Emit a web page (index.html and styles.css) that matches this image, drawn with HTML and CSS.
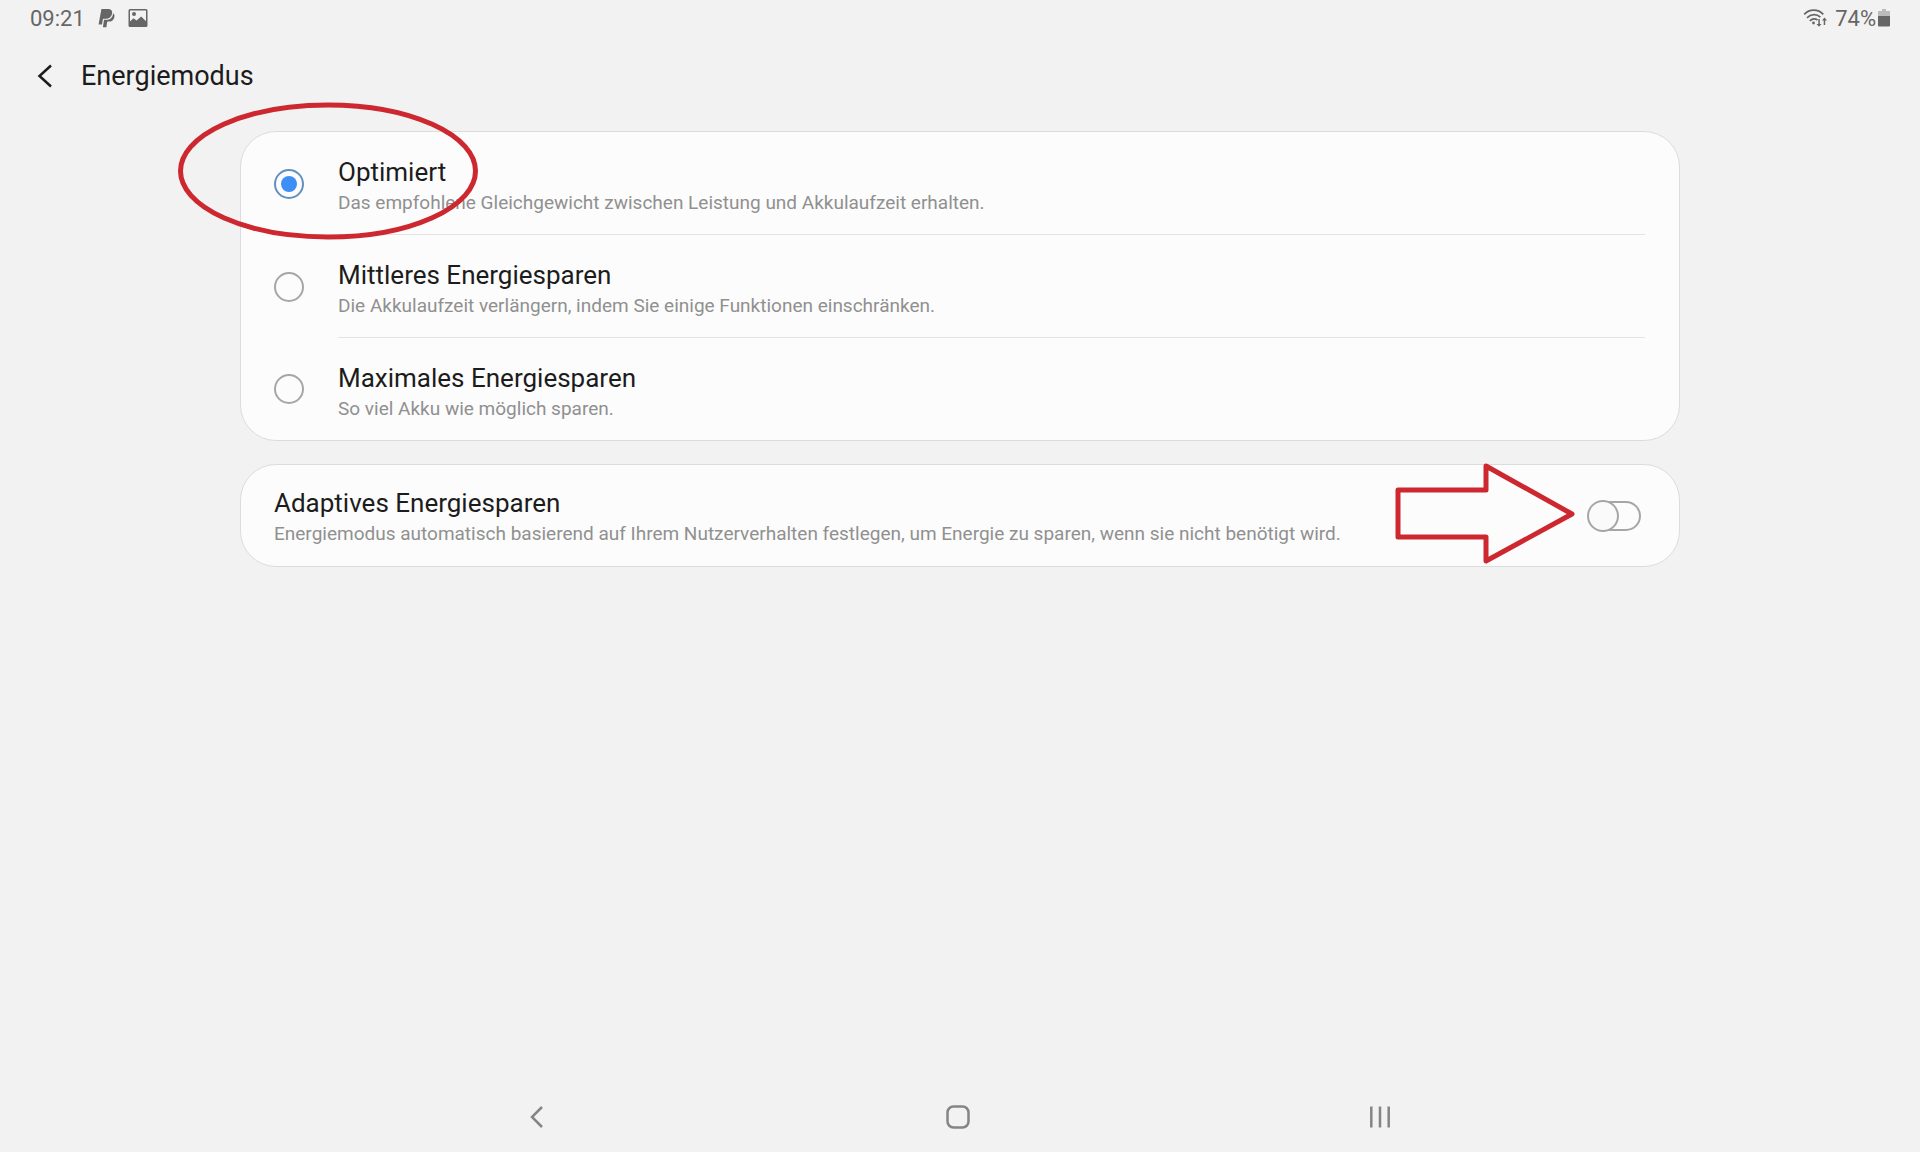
FILE: index.html
```html
<!DOCTYPE html>
<html lang="de">
<head>
    <meta charset="UTF-8">
    <meta name="viewport" content="width=device-width, initial-scale=1.0">
    <title>Energiemodus</title>
    <link rel="stylesheet" href="styles.css">
</head>
<body>
    <div class="status-bar">
        <div class="status-left">
            <span>09:21</span>
            <svg class="icon-paypal" width="17" height="20" viewBox="0 0 17 20">
                <path d="M3.4 1H10c3.200 0 4.600 1.700 4.100 4.500-.600 3.500-2.900 5.200-6.300 5.200H5.700c-.500 0-.800.300-.900.800L4 16.500H.600z"/>
                <path d="M15.200 5.200c1.100.800 1.500 2 1.200 3.700-.600 3.200-2.600 4.700-5.700 4.700h-.800c-.400 0-.700.300-.800.700l-.700 4.900H4.900l1.100-7.400h2.300c3.900 0 6.300-2.200 6.900-6.600z"/>
            </svg>
            <svg width="20" height="20" viewBox="0 0 20 20">
                <path fill-rule="evenodd" d="M2 1h16a1.500 1.500 0 0 1 1.500 1.500v15A1.500 1.500 0 0 1 18 19H2a1.500 1.500 0 0 1-1.500-1.500v-15A1.500 1.500 0 0 1 2 1zm0 1.600v11l3.500-3.400 3 2.400 4.700-4.200 4.800 4.800V2.600zM6 4a2 2 0 1 1 0 4 2 2 0 0 1 0-4z"/>
            </svg>
        </div>
        <div class="status-right">
            <svg width="25" height="20" viewBox="0 0 25 20">
                <g fill="none" stroke="#666" stroke-width="1.800">
                    <path d="M1.200 6.300C6.500.800 15 .800 20.300 6.300"/>
                    <path d="M4 9.800c4-4 9.600-4 13.400-.600"/>
                    <path d="M6.800 12.800c2.400-2.200 5.400-2.300 7.700-.800"/>
                </g>
                <circle cx="10.500" cy="15" r="1.400"/>
                <path d="M15.300 11h1.500v5h1.700L16 18.800 13.500 16h1.800zM20.700 17h1.500v-4.500H24l-2.500-2.900-2.500 2.900h1.700z"/>
            </svg>
            <span>74%</span>
            <svg class="icon-battery" width="12" height="20" viewBox="0 0 12 20">
                <path fill="#bbb" d="M4 1h4v2h4v5H0V3h4z"/>
                <path d="M0 8h12v9.500a1 1 0 0 1-1 1H1a1 1 0 0 1-1-1z"/>
            </svg>
        </div>
    </div>

    <header class="header">
        <button type="button" class="back-btn" aria-label="Zurück">
            <svg width="16" height="26" viewBox="0 0 16 26">
                <path d="M14 2.500 2.500 13 14 23.500"/>
            </svg>
        </button>
        <h1>Energiemodus</h1>
    </header>

    <main class="content">
        <form class="card">
            <div class="option">
                <input type="radio" name="mode" id="optimiert" checked>
                <label for="optimiert">
                    <span class="title">Optimiert</span>
                    <span class="desc">Das empfohlene Gleichgewicht zwischen Leistung und Akkulaufzeit erhalten.</span>
                </label>
            </div>
            <div class="option">
                <input type="radio" name="mode" id="mittel">
                <label for="mittel">
                    <span class="title">Mittleres Energiesparen</span>
                    <span class="desc">Die Akkulaufzeit verlängern, indem Sie einige Funktionen einschränken.</span>
                </label>
            </div>
            <div class="option">
                <input type="radio" name="mode" id="maximal">
                <label for="maximal">
                    <span class="title">Maximales Energiesparen</span>
                    <span class="desc">So viel Akku wie möglich sparen.</span>
                </label>
            </div>
            <svg class="mark mark-circle" width="300" height="138" viewBox="0 0 300 138">
                <ellipse cx="150" cy="69" rx="147.500" ry="66"/>
            </svg>
        </form>

        <div class="card adaptive">
            <label for="adaptiv">
                <span class="title">Adaptives Energiesparen</span>
                <span class="desc">Energiemodus automatisch basierend auf Ihrem Nutzerverhalten festlegen, um Energie zu sparen, wenn sie nicht benötigt wird.</span>
            </label>
            <input type="checkbox" class="switch" id="adaptiv" role="switch">
            <svg class="mark mark-arrow" width="180" height="102" viewBox="0 0 180 102">
                <path d="M3 27h88V3l86 48-86 47V74H3z"/>
            </svg>
        </div>
    </main>

    <nav class="nav-bar">
        <button type="button" aria-label="Zurück">
            <svg width="24" height="24" viewBox="0 0 24 24"><path d="M17 2 7 12l10 10"/></svg>
        </button>
        <button type="button" aria-label="Startseite">
            <svg width="24" height="24" viewBox="0 0 24 24"><rect x="1.500" y="1.500" width="21" height="21" rx="6"/></svg>
        </button>
        <button type="button" aria-label="Letzte Apps">
            <svg width="24" height="24" viewBox="0 0 24 24"><path d="M3.300 1.500v21M12 1.500v21M20.700 1.500v21"/></svg>
        </button>
    </nav>
</body>
</html>
```
FILE: styles.css
```css
*,
*::before {
    box-sizing: border-box;
}
body {
    font-family: Roboto, sans-serif;
    background: #f2f2f2;
    color: #1c1c1c;
    display: flex;
    flex-direction: column;
    min-height: 100vh;
    margin: 0;
}
button {
    display: flex;
    align-items: center;
    justify-content: center;
    padding: 0;
    border: none;
    background: none;
    cursor: pointer;
}
svg {
    flex: none;
}

/* Status bar */
.status-bar {
    display: flex;
    justify-content: space-between;
    height: 36px;
    padding: 0 30px;
    font-size: 22px;
    color: #666;
}
.status-left,
.status-right {
    display: flex;
    align-items: center;
}
.status-bar svg {
    fill: #666;
}
.icon-paypal {
    margin: 0 13px;
}
.status-right span {
    margin-left: 7px;
}
.icon-battery {
    margin-left: 2px;
}

/* Header */
.header {
    display: flex;
    align-items: center;
    height: 80px;
    padding: 0 37px;
}
.back-btn {
    width: 16px;
    height: 48px;
    margin-right: 28px;
}
.back-btn svg {
    fill: none;
    stroke: #1c1c1c;
    stroke-width: 2.5;
}
h1 {
    margin: 0;
    font-size: 27px;
    font-weight: 400;
}

/* Cards */
.content {
    flex: 1;
    width: 75%;
    margin: 0 auto;
    padding-top: 15px;
}
.card {
    position: relative;
    margin-bottom: 23px;
    border: 1px solid #dcdcdc;
    border-radius: 36px;
    background: #fcfcfc;
}
.option {
    display: flex;
    align-items: center;
    padding: 0 34px 0 33px;
}
label {
    flex: 1;
    padding: 23px 0 17px;
    cursor: pointer;
}
.option label {
    border-bottom: 1px solid #e4e4e4;
}
.option:nth-child(3) label {
    border-bottom: none;
}
.title,
.desc {
    display: block;
}
.title {
    font-size: 26px;
    line-height: 34px;
}
.desc {
    font-size: 19px;
    line-height: 28px;
    color: #909090;
}

/* Radio buttons */
input[type="radio"] {
    appearance: none;
    display: grid;
    place-items: center;
    width: 30px;
    height: 30px;
    margin: 0 34px 0 0;
    border: 2px solid #a6a6a6;
    border-radius: 50%;
}
input[type="radio"]:checked {
    border-color: #6390bd;
}
input[type="radio"]:checked::before {
    content: "";
    width: 16px;
    height: 16px;
    border-radius: 50%;
    background: #3e8ff5;
}

/* Switch */
.adaptive {
    display: flex;
    align-items: center;
    padding: 0 38px 0 33px;
}
.adaptive label {
    padding: 21px 0 18px;
}
.switch {
    appearance: none;
    display: flex;
    align-items: center;
    width: 50px;
    height: 30px;
    margin: 0;
    border: 2px solid #a6a6a6;
    border-radius: 15px;
}
.switch::before {
    content: "";
    flex: none;
    width: 32px;
    height: 32px;
    margin-left: -6px;
    border: 2px solid #a6a6a6;
    border-radius: 50%;
    background: #fafafa;
}

/* Red marks drawn over the cards */
.mark {
    position: absolute;
    fill: none;
    stroke: #cd272f;
    stroke-width: 5;
    stroke-linejoin: round;
    pointer-events: none;
}
.mark-circle {
    top: -30px;
    left: -63px;
}
.mark-arrow {
    top: -2px;
    right: 104px;
}

/* Navigation bar */
.nav-bar {
    display: grid;
    grid-template-columns: repeat(3, 22%);
    justify-content: center;
    height: 70px;
    padding-right: 3px;
}
.nav-bar svg {
    fill: none;
    stroke: #858585;
    stroke-width: 2.5;
}
```
